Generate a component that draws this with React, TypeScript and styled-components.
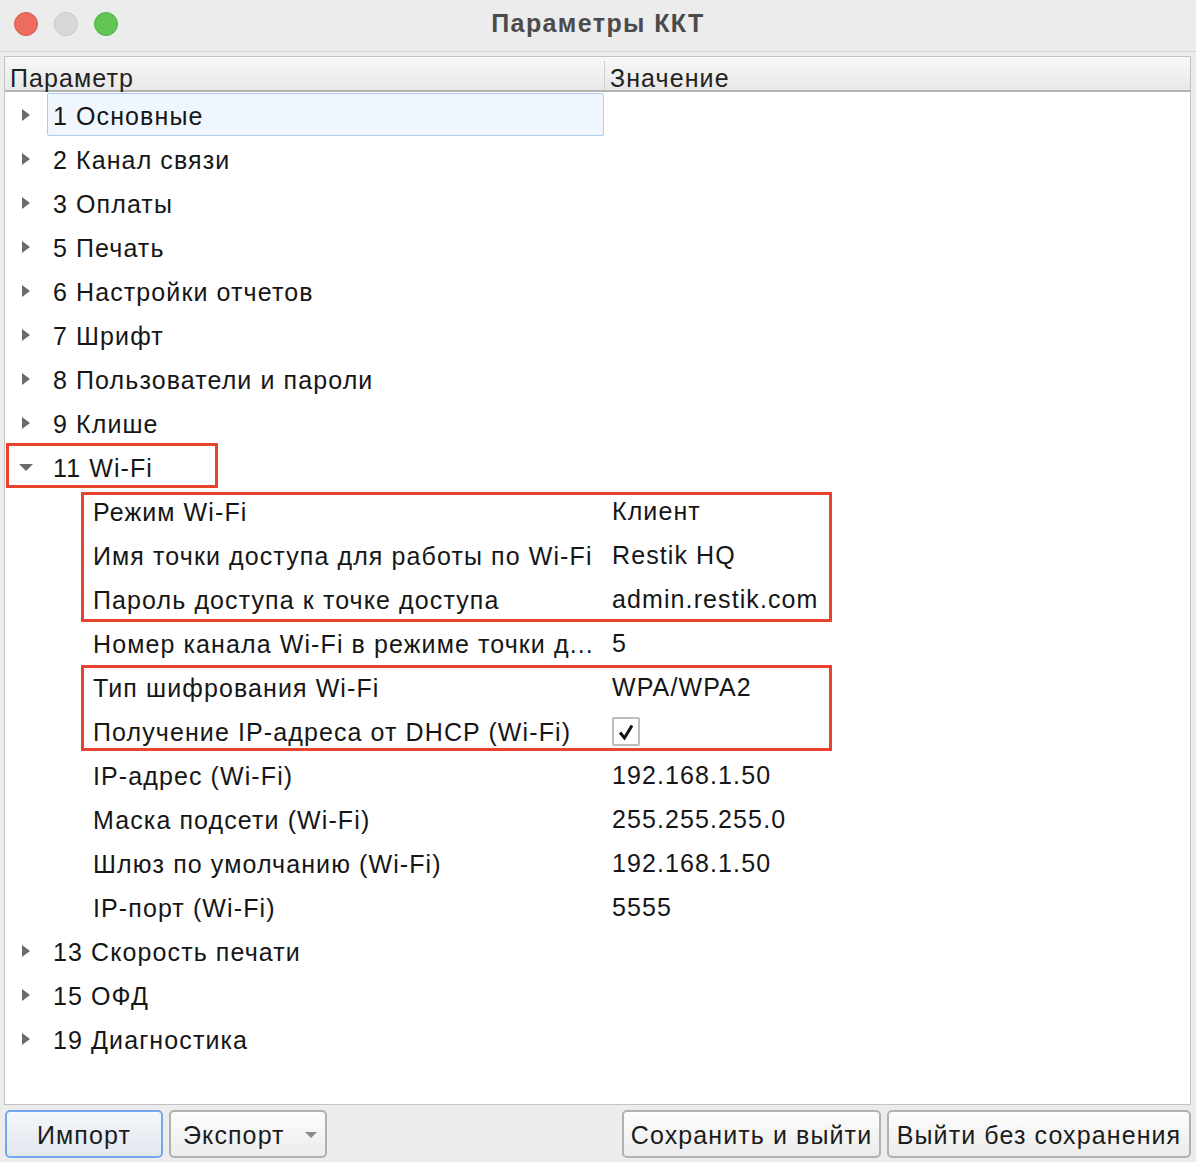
import React from "react";
import styled, { createGlobalStyle } from "styled-components";

const GlobalStyle = createGlobalStyle`
  html, body { margin: 0; padding: 0; }
  body {
    background: #ececec;
    font-family: "Liberation Sans", Arial, sans-serif;
    color: #1a1a1a;
  }
`;

const FONT = `"Liberation Sans", Arial, sans-serif`;

const Window = styled.div`
  width: 1196px;
  height: 1162px;
  background: #ececec;
  display: flex;
  flex-direction: column;
  overflow: hidden;
`;

const TitleBar = styled.div`
  height: 52px;
  box-sizing: border-box;
  padding-bottom: 5px;
  border-bottom: 1px solid #d3d3d3;
  display: grid;
  grid-template-columns: 1fr auto 1fr;
  align-items: center;
  background: #ececec;
`;

const Lights = styled.div`
  display: flex;
  gap: 16px;
  padding-left: 14px;
  padding-top: 2px;
`;

const Light = styled.span<{ $bg: string; $bd: string }>`
  width: 22px;
  height: 22px;
  border-radius: 50%;
  background: ${(p) => p.$bg};
  border: 1px solid ${(p) => p.$bd};
`;

const Title = styled.div`
  font-family: ${FONT};
  font-weight: 700;
  font-size: 25px;
  color: #4b4b4b;
  letter-spacing: 1.4px;
`;

const Content = styled.div`
  flex: 1;
  display: flex;
  flex-direction: column;
  padding: 4px 5px 4px 4px;
  gap: 5px;
`;

const TablePanel = styled.div`
  flex: 1;
  background: #fff;
  border: 1px solid #c2c2c2;
  display: flex;
  flex-direction: column;
`;

const Header = styled.div`
  height: 33px;
  display: grid;
  grid-template-columns: 599px 1px 1fr;
  background: linear-gradient(#f8f8f8, #e8e8e8);
  border-bottom: 2px solid #b3b3b3;
`;

const HeaderCell = styled.div`
  font-family: ${FONT};
  font-size: 25px;
  color: #222;
  display: flex;
  align-items: flex-end;
  padding: 0 0 0 5px;
  line-height: 24px;
  letter-spacing: 1.1px;
`;

const HeaderDivider = styled.div`
  background: #d0d0d0;
  margin-top: 4px;
`;

const Body = styled.div`
  position: relative;
  flex: 1;
`;

const Row = styled.div`
  height: 44px;
  display: grid;
  grid-template-columns: 599px 1fr;
  align-items: stretch;
`;

const NameCell = styled.div<{ $indent: number }>`
  display: flex;
  align-items: stretch;
  padding-left: ${(p) => p.$indent}px;
`;

const Disclosure = styled.div`
  width: 42px;
  display: flex;
  align-items: center;
  justify-content: center;
  padding-top: 1px;
`;

const Label = styled.div<{ $selected?: boolean }>`
  flex: 1;
  display: flex;
  align-items: center;
  padding: 3px 0 0 5px;
  margin: 1px 0 0;
  font-family: ${FONT};
  font-size: 25px;
  letter-spacing: 1.1px;
  white-space: nowrap;
  color: #161616;
  border: 1px solid ${(p) => (p.$selected ? "#aeccf3" : "transparent")};
  border-radius: 2px;
  background: ${(p) => (p.$selected ? "#f0f6fe" : "transparent")};
`;

const ValueCell = styled.div`
  display: flex;
  align-items: center;
  padding: 3px 0 0 8px;
  font-family: ${FONT};
  font-size: 25px;
  letter-spacing: 1.1px;
  color: #161616;
  white-space: nowrap;
`;

const CheckBox = styled.span`
  width: 24px;
  height: 25px;
  border: 2px solid #bcbcbc;
  border-radius: 2px;
  background: #fff;
  display: flex;
  align-items: center;
  justify-content: center;
`;

const Highlight = styled.div<{ $l: number; $t: number; $w: number; $h: number }>`
  position: absolute;
  left: ${(p) => p.$l}px;
  top: ${(p) => p.$t}px;
  width: ${(p) => p.$w}px;
  height: ${(p) => p.$h}px;
  border: 3px solid #e8432d;
  box-sizing: border-box;
  pointer-events: none;
`;

const ButtonBar = styled.div`
  height: 48px;
  display: flex;
  align-items: stretch;
  gap: 6px;
  padding-left: 1px;
`;

const Spacer = styled.div`
  flex: 1;
`;

const Button = styled.button<{ $w: number; $focused?: boolean; $menu?: boolean }>`
  width: ${(p) => p.$w}px;
  font-family: ${FONT};
  font-size: 25px;
  letter-spacing: 1.1px;
  color: #1c1c1c;
  border-radius: 5px;
  border: ${(p) => (p.$focused ? "2px solid #72a9ec" : "2px solid #b1b1b1")};
  background: ${(p) =>
    p.$focused
      ? "linear-gradient(#f4f7fb, #e2e7ee)"
      : "linear-gradient(#fdfdfd, #ececec)"};
  display: flex;
  align-items: center;
  justify-content: ${(p) => (p.$menu ? "space-between" : "center")};
  padding: ${(p) => (p.$menu ? "2px 8px 0 12px" : "2px 0 0")};
  white-space: nowrap;
`;

const ArrowRight = () => (
  <svg width="10" height="14" viewBox="0 0 10 14">
    <path d="M1 1 L9 7 L1 13 Z" fill="#6b6b6b" />
  </svg>
);

const ArrowDown = () => (
  <svg width="16" height="10" viewBox="0 0 16 10">
    <path d="M1 2 L15 2 L8 9 Z" fill="#6b6b6b" />
  </svg>
);

const SmallDown = () => (
  <svg width="12" height="8" viewBox="0 0 12 8">
    <path d="M0 1 L12 1 L6 7 Z" fill="#8a8a8a" />
  </svg>
);

const Check = () => (
  <svg width="18" height="18" viewBox="0 0 18 18">
    <path d="M3 9.5 L7.5 15 L15 2.5" fill="none" stroke="#111" strokeWidth="3" strokeLinejoin="miter" />
  </svg>
);

type Item =
  | { kind: "group"; label: string; open?: boolean; selected?: boolean }
  | { kind: "param"; label: string; value: string | null };

const items: Item[] = [
  { kind: "group", label: "1 Основные", selected: true },
  { kind: "group", label: "2 Канал связи" },
  { kind: "group", label: "3 Оплаты" },
  { kind: "group", label: "5 Печать" },
  { kind: "group", label: "6 Настройки отчетов" },
  { kind: "group", label: "7 Шрифт" },
  { kind: "group", label: "8 Пользователи и пароли" },
  { kind: "group", label: "9 Клише" },
  { kind: "group", label: "11 Wi-Fi", open: true },
  { kind: "param", label: "Режим Wi-Fi", value: "Клиент" },
  { kind: "param", label: "Имя точки доступа для работы по Wi-Fi", value: "Restik HQ" },
  { kind: "param", label: "Пароль доступа к точке доступа", value: "admin.restik.com" },
  { kind: "param", label: "Номер канала Wi-Fi в режиме точки д...", value: "5" },
  { kind: "param", label: "Тип шифрования Wi-Fi", value: "WPA/WPA2" },
  { kind: "param", label: "Получение IP-адреса от DHCP (Wi-Fi)", value: null },
  { kind: "param", label: "IP-адрес (Wi-Fi)", value: "192.168.1.50" },
  { kind: "param", label: "Маска подсети (Wi-Fi)", value: "255.255.255.0" },
  { kind: "param", label: "Шлюз по умолчанию (Wi-Fi)", value: "192.168.1.50" },
  { kind: "param", label: "IP-порт (Wi-Fi)", value: "5555" },
  { kind: "group", label: "13 Скорость печати" },
  { kind: "group", label: "15 ОФД" },
  { kind: "group", label: "19 Диагностика" },
];

export default function App() {
  return (
    <>
      <GlobalStyle />
      <Window>
        <TitleBar>
          <Lights>
            <Light $bg="#ee6b60" $bd="#d85a50" />
            <Light $bg="#d8d8d8" $bd="#c6c6c6" />
            <Light $bg="#62c655" $bd="#54ad47" />
          </Lights>
          <Title>Параметры ККТ</Title>
          <div />
        </TitleBar>
        <Content>
          <TablePanel>
            <Header>
              <HeaderCell>Параметр</HeaderCell>
              <HeaderDivider />
              <HeaderCell>Значение</HeaderCell>
            </Header>
            <Body>
              {items.map((it, i) =>
                it.kind === "group" ? (
                  <Row key={i}>
                    <NameCell $indent={0}>
                      <Disclosure>{it.open ? <ArrowDown /> : <ArrowRight />}</Disclosure>
                      <Label $selected={it.selected}>{it.label}</Label>
                    </NameCell>
                    <ValueCell />
                  </Row>
                ) : (
                  <Row key={i}>
                    <NameCell $indent={82}>
                      <Label>{it.label}</Label>
                    </NameCell>
                    <ValueCell>
                      {it.value === null ? (
                        <CheckBox>
                          <Check />
                        </CheckBox>
                      ) : (
                        it.value
                      )}
                    </ValueCell>
                  </Row>
                )
              )}
              <Highlight $l={1} $t={351} $w={212} $h={45} />
              <Highlight $l={76} $t={400} $w={751} $h={130} />
              <Highlight $l={76} $t={573} $w={751} $h={86} />
            </Body>
          </TablePanel>
          <ButtonBar>
            <Button $w={158} $focused>Импорт</Button>
            <Button $w={158} $menu>
              <span>Экспорт</span>
              <SmallDown />
            </Button>
            <Spacer />
            <Button $w={259}>Сохранить и выйти</Button>
            <Button $w={304}>Выйти без сохранения</Button>
          </ButtonBar>
        </Content>
      </Window>
    </>
  );
}
